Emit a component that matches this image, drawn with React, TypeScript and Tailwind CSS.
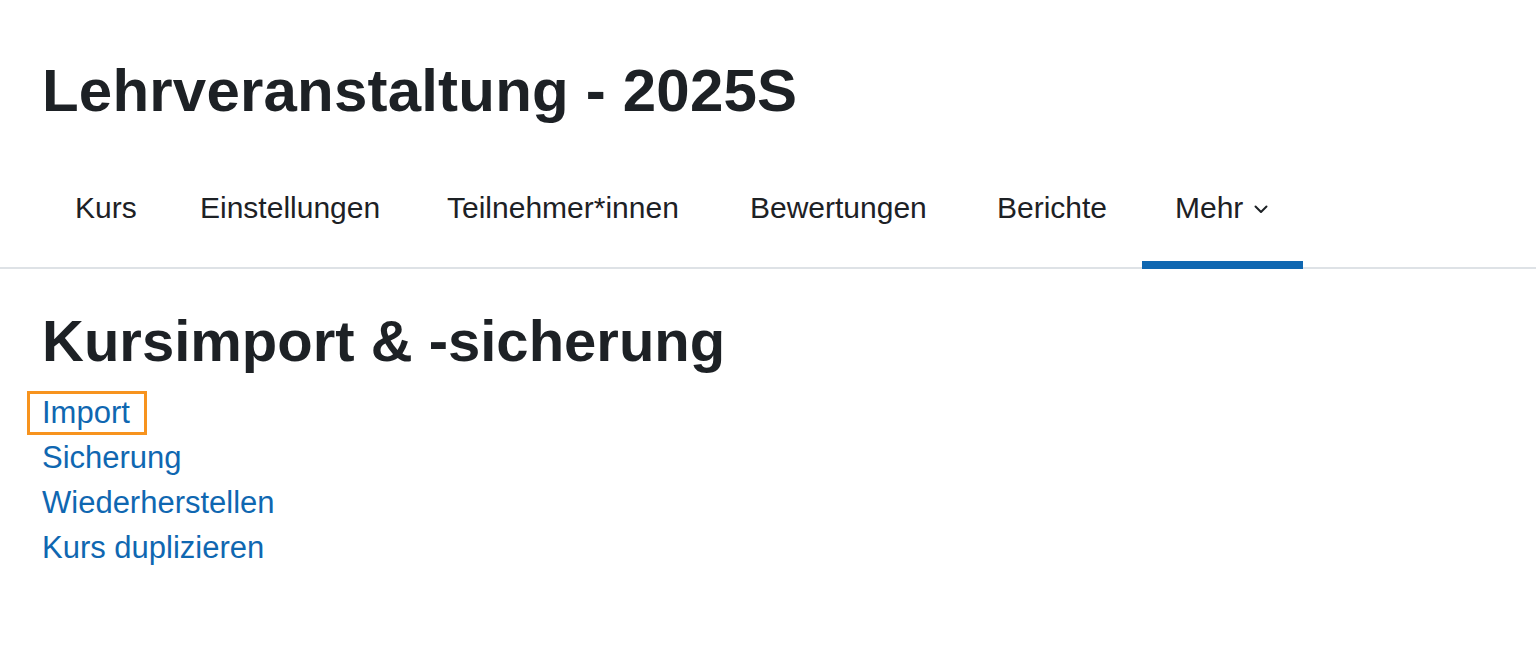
import React from 'react';

// Breiten der Reiter wie im Original (Text + Innenabstand)
const navItems = [
  { label: 'Kurs', width: 125 },
  { label: 'Einstellungen', width: 247 },
  { label: 'Teilnehmer*innen', width: 303 },
  { label: 'Bewertungen', width: 247 },
  { label: 'Berichte', width: 178 },
  { label: 'Mehr', width: 161, active: true, dropdown: true },
];

const links = ['Import', 'Sicherung', 'Wiederherstellen', 'Kurs duplizieren'];

const App = () => {
  return (
    <div className="min-h-screen bg-white text-[#1d2125] font-['Liberation_Sans',Arial,sans-serif]">
      {/* Kopfbereich */}
      <div className="px-[42px] pt-[55px]">
        <h1 className="text-[60px] leading-[72px] font-bold tracking-[0.2px]">Lehrveranstaltung - 2025S</h1>
      </div>

      {/* Sekundäre Navigation */}
      <nav className="flex border-b-2 border-[#dee2e6] px-[42px]">
        {navItems.map((item) => (
          <a
            key={item.label}
            href="#"
            style={{ width: item.width }}
            className={`-mb-[2px] flex shrink-0 items-start pl-[33px] pt-[58px] pb-[31px] text-[30px] leading-[45px] whitespace-nowrap border-b-[8px] ${
              item.active ? 'border-[#0f67b1]' : 'border-transparent'
            }`}
          >
            <span>{item.label}</span>
            {item.dropdown && (
              <svg width="14" height="9" viewBox="0 0 14 9" className="ml-[11px] mt-[20px]" fill="none">
                <polyline points="1.5,1.5 7,7 12.5,1.5" stroke="#1d2125" strokeWidth="2" strokeLinecap="round" strokeLinejoin="round" />
              </svg>
            )}
          </a>
        ))}
      </nav>

      {/* Inhalt */}
      <div className="px-[42px] pt-[37px]">
        <h2 className="text-[58px] leading-[70px] font-bold">Kursimport &amp; -sicherung</h2>
        <ul className="mt-[14px]">
          {links.map((label, i) => (
            <li key={label} className="text-[31px] leading-[45px]">
              <a href="#" className="relative inline-block text-[#0f67b1]">
                {label}
                {i === 0 && (
                  <span className="absolute left-[-15px] top-[1px] h-[44px] w-[120px] border-[3px] border-[#f7931e]" />
                )}
              </a>
            </li>
          ))}
        </ul>
      </div>
    </div>
  );
};

export default App;
